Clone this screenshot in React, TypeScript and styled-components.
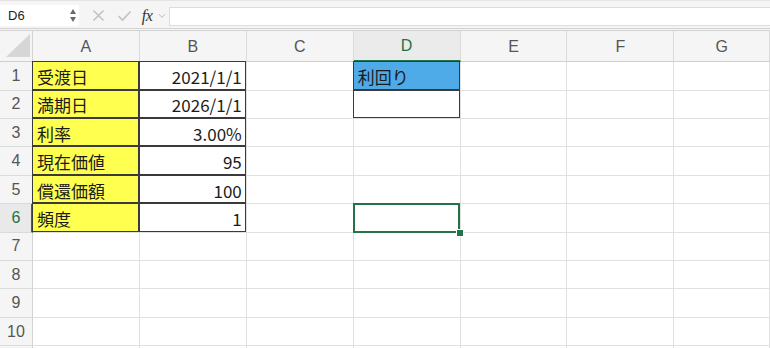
import React from "react";
import styled, { createGlobalStyle, css } from "styled-components";

const Global = createGlobalStyle`
  html, body { margin: 0; padding: 0; background: #ffffff; }
  body { width: 770px; height: 348px; overflow: hidden; font-family: "Liberation Sans", "Noto Sans CJK JP", sans-serif; }
  #root { width: 770px; height: 348px; overflow: hidden; }
`;

const Page = styled.div`
  width: 770px;
  height: 348px;
  display: flex;
  flex-direction: column;
  overflow: hidden;
  background: #f5f5f5;
`;

const Toolbar = styled.div`
  height: 29px;
  display: flex;
  align-items: stretch;
  box-sizing: border-box;
  padding-top: 4px;
  padding-bottom: 2px;
  border-top: 1px solid #e4e4e4;
  border-bottom: 1px solid #d2d2d2;
  background: #f5f5f5;
  flex-shrink: 0;
`;

const NameBox = styled.div`
  width: 79px;
  background: #ffffff;
  display: flex;
  align-items: center;
  justify-content: space-between;
  box-sizing: border-box;
  padding: 0 3px 0 8px;
  font-family: "Liberation Sans", sans-serif;
  font-size: 13px;
  color: #1e1e1e;
`;

const Spinner = styled.div`
  display: flex;
  flex-direction: column;
  gap: 3px;
  align-items: center;
`;

const Tri = styled.span<{ $down?: boolean }>`
  width: 0;
  height: 0;
  border-left: 3.5px solid transparent;
  border-right: 3.5px solid transparent;
  ${(p) =>
    p.$down
      ? css`border-top: 5px solid #6a6a6a;`
      : css`border-bottom: 5px solid #6a6a6a;`}
`;

const Controls = styled.div`
  display: flex;
  align-items: center;
  padding-left: 6px;
`;

const IconSlot = styled.span<{ $w: number }>`
  width: ${(p) => p.$w}px;
  display: flex;
  align-items: center;
  justify-content: center;
`;

const Fx = styled.span`
  font-family: "Liberation Serif", serif;
  font-style: italic;
  font-size: 16px;
  color: #333;
  letter-spacing: -0.5px;
`;

const FormulaInput = styled.div`
  flex: 1;
  margin-top: 2px;
  margin-left: 2px;
  background: #ffffff;
  border: 1px solid #dcdcdc;
  border-right: none;
`;

const Sheet = styled.div`
  margin-top: 1px;
  border-top: 1px solid #d2d2d2;
  flex: 1;
  display: grid;
  grid-template-columns: 33px repeat(6, 106.9px) 1fr;
  grid-template-rows: 31.3px repeat(11, 28.4px);
  background: #ffffff;
  overflow: hidden;
`;

const Corner = styled.div`
  background: #f5f5f5;
  border-right: 1px solid #d4d4d4;
  border-bottom: 1px solid #cfcfcf;
  box-sizing: border-box;
  display: flex;
  align-items: flex-end;
  justify-content: flex-end;
  padding: 0 2px 4px 0;
`;

const ColHead = styled.div<{ $active?: boolean }>`
  background: ${(p) => (p.$active ? "#ebebeb" : "#f5f5f5")};
  border-right: 1px solid #dadada;
  border-bottom: ${(p) => (p.$active ? "2px solid #227447" : "1px solid #cfcfcf")};
  box-sizing: border-box;
  display: flex;
  align-items: center;
  justify-content: center;
  font-family: "Liberation Sans", sans-serif;
  font-size: 16px;
  color: ${(p) => (p.$active ? "#217346" : "#555555")};
  padding-top: 1px;
`;

const RowHead = styled.div<{ $active?: boolean }>`
  background: ${(p) => (p.$active ? "#e9e9e9" : "#f5f5f5")};
  border-right: ${(p) => (p.$active ? "2px solid #227447" : "1px solid #d4d4d4")};
  border-bottom: 1px solid #dadada;
  box-sizing: border-box;
  display: flex;
  align-items: center;
  justify-content: center;
  font-family: "Liberation Sans", sans-serif;
  font-size: 16px;
  color: ${(p) => (p.$active ? "#217346" : "#555555")};
  padding-left: ${(p) => (p.$active ? "1px" : "0")};
`;

type Fill = "yellow" | "blue" | undefined;

const fills: Record<string, string> = {
  yellow: "#ffff50",
  blue: "#4eabe8",
};

const Cell = styled.div<{
  $fill?: Fill;
  $right?: boolean;
  $boxed?: boolean;
  $selected?: boolean;
}>`
  position: relative;
  box-sizing: border-box;
  border-right: 1px solid #e0e0e0;
  border-bottom: 1px solid #e0e0e0;
  background: ${(p) => (p.$fill ? fills[p.$fill] : "#ffffff")};
  display: flex;
  align-items: center;
  justify-content: ${(p) => (p.$right ? "flex-end" : "flex-start")};
  padding: 1px 4px 0 4px;
  font-family: "Noto Sans CJK JP", sans-serif;
  font-size: 17px;
  color: #1b1b1b;
  white-space: nowrap;
  ${(p) =>
    p.$boxed &&
    css`
      &::after {
        content: "";
        position: absolute;
        inset: -1px 0 0 -1px;
        border: 1px solid #3a3a3a;
        pointer-events: none;
      }
    `}
  ${(p) =>
    p.$selected &&
    css`
      z-index: 2;
      &::after {
        content: "";
        position: absolute;
        inset: -1px 0 -1px -1px;
        border: 2px solid #227447;
        pointer-events: none;
      }
    `}
`;

const Handle = styled.span`
  position: absolute;
  right: -3px;
  bottom: -4px;
  width: 6px;
  height: 6px;
  background: #227447;
  border: 1px solid #ffffff;
  box-sizing: content-box;
  margin: -1px;
  z-index: 3;
`;

type CellSpec = {
  text?: string;
  fill?: Fill;
  right?: boolean;
  boxed?: boolean;
  selected?: boolean;
};

const cols = ["A", "B", "C", "D", "E", "F", "G"];

const labels = ["受渡日", "満期日", "利率", "現在価値", "償還価額", "頻度"];
const values = ["2021/1/1", "2026/1/1", "3.00%", "95", "100", "1"];

function cellFor(row: number, col: number): CellSpec {
  if (row <= 6 && col === 0) return { text: labels[row - 1], fill: "yellow", boxed: true };
  if (row <= 6 && col === 1) return { text: values[row - 1], right: true, boxed: true };
  if (row === 1 && col === 3) return { text: "利回り", fill: "blue", boxed: true };
  if (row === 2 && col === 3) return { boxed: true };
  if (row === 6 && col === 3) return { selected: true };
  return {};
}

const CrossIcon = () => (
  <svg width="13" height="13" viewBox="0 0 13 13">
    <path d="M1.5 1.5 L11.5 11.5 M11.5 1.5 L1.5 11.5" stroke="#c2c2c2" strokeWidth="1.6" fill="none" />
  </svg>
);

const CheckIcon = () => (
  <svg width="15" height="12" viewBox="0 0 15 12">
    <path d="M1.5 6 L5.5 10 L13.5 1.5" stroke="#c2c2c2" strokeWidth="1.6" fill="none" />
  </svg>
);

const Chevron = () => (
  <svg width="8" height="6" viewBox="0 0 8 6">
    <path d="M1 1.2 L4 4.4 L7 1.2" stroke="#bdbdbd" strokeWidth="1" fill="none" />
  </svg>
);

const CornerTriangle = () => (
  <svg width="24" height="23" viewBox="0 0 24 23">
    <polygon points="24,0 24,23 0,23" fill="#d6d6d6" />
  </svg>
);

export default function App() {
  const rows = Array.from({ length: 11 }, (_, i) => i + 1);
  return (
    <>
      <Global />
      <Page>
        <Toolbar>
          <NameBox>
            <span>D6</span>
            <Spinner>
              <Tri />
              <Tri $down />
            </Spinner>
          </NameBox>
          <Controls>
            <IconSlot $w={26}>
              <CrossIcon />
            </IconSlot>
            <IconSlot $w={26}>
              <CheckIcon />
            </IconSlot>
            <IconSlot $w={20}>
              <Fx>fx</Fx>
            </IconSlot>
            <IconSlot $w={10}>
              <Chevron />
            </IconSlot>
          </Controls>
          <FormulaInput />
        </Toolbar>
        <Sheet>
          <Corner>
            <CornerTriangle />
          </Corner>
          {cols.map((c) => (
            <ColHead key={c} $active={c === "D"}>
              {c}
            </ColHead>
          ))}
          {rows.map((r) => (
            <React.Fragment key={r}>
              <RowHead $active={r === 6}>{r <= 10 ? r : ""}</RowHead>
              {cols.map((c, ci) => {
                const spec = cellFor(r, ci);
                return (
                  <Cell
                    key={c}
                    $fill={spec.fill}
                    $right={spec.right}
                    $boxed={spec.boxed}
                    $selected={spec.selected}
                  >
                    {spec.text}
                    {spec.selected && <Handle />}
                  </Cell>
                );
              })}
            </React.Fragment>
          ))}
        </Sheet>
      </Page>
    </>
  );
}
